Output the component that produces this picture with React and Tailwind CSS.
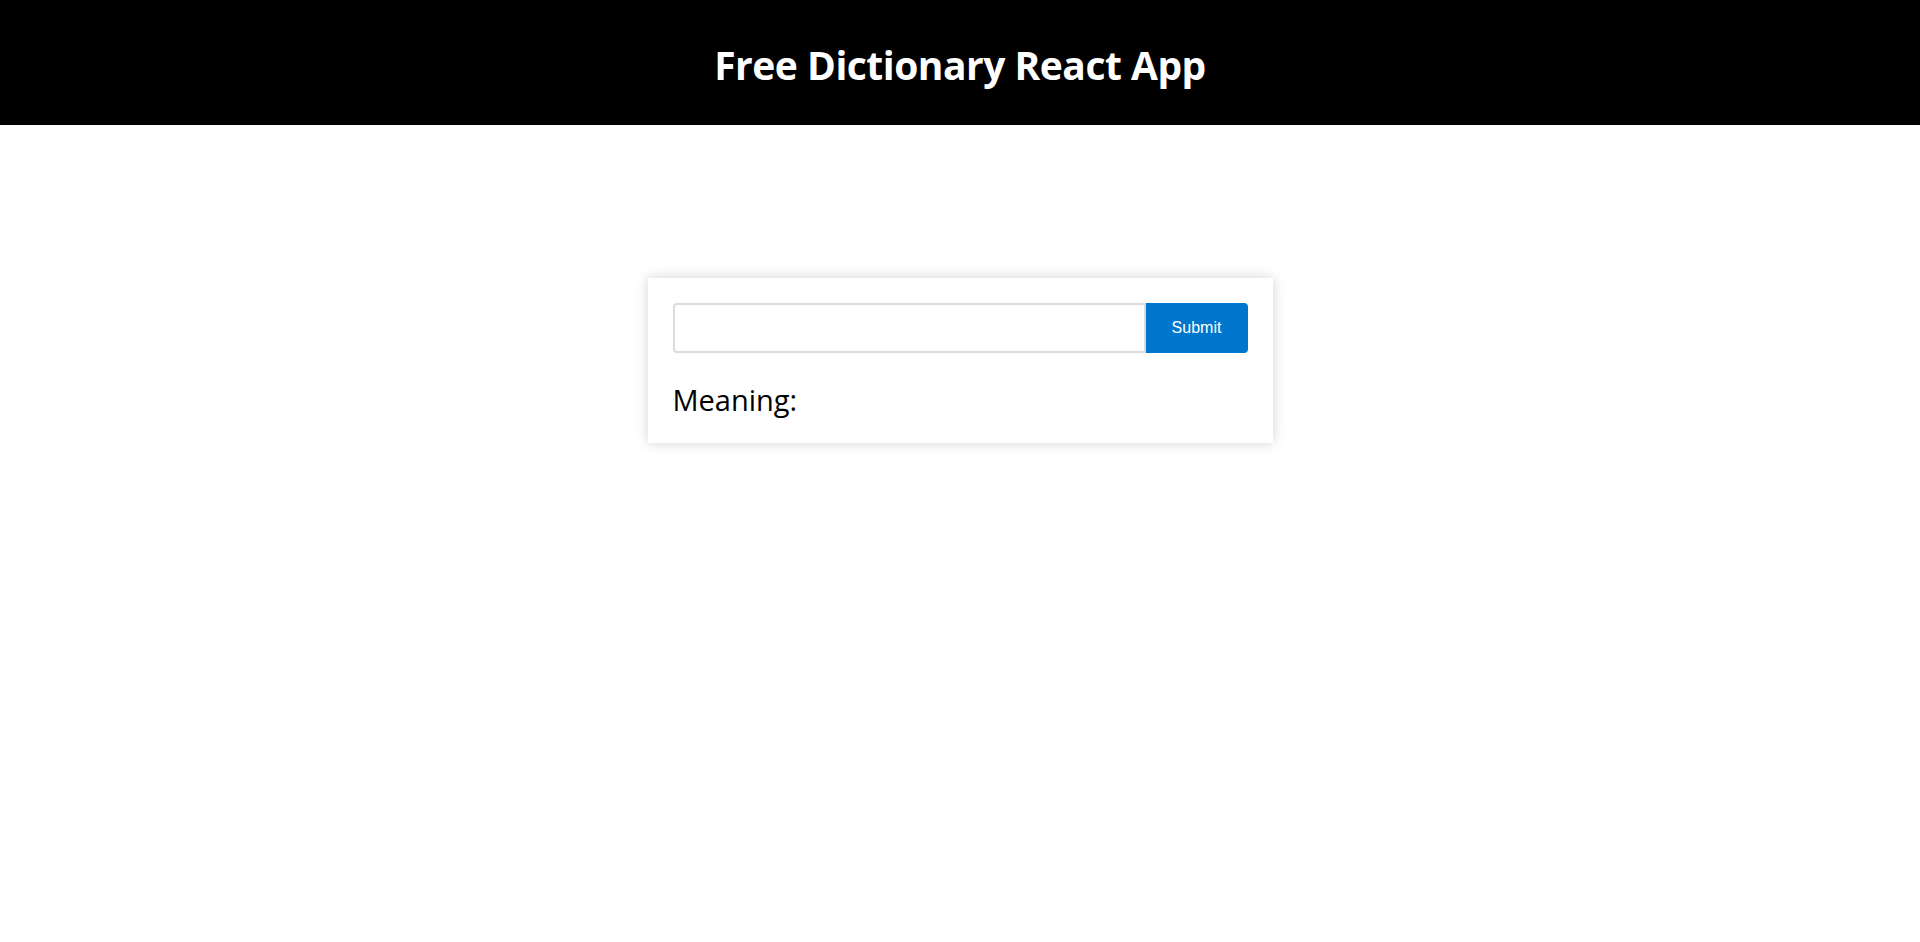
export default function App() {
  return (
    <div className="min-h-[942px] bg-white" style={{ fontFamily: '"Open Sans", "Noto Sans", sans-serif' }}>
      <header className="h-[125px] bg-black flex items-center justify-center pt-[4px]">
        <h1 className="text-white font-bold text-[39px] leading-none tracking-[-0.5px]">Free Dictionary React App</h1>
      </header>
      <main className="flex justify-center pt-[153px]">
        <div className="w-[625px] bg-white shadow-[0_0_12px_rgba(0,0,0,0.18)] px-[25px] pt-[25px] pb-[23px]">
          <form className="flex h-[50px]" onSubmit={(e) => e.preventDefault()}>
            <input type="text" className="flex-1 border-2 border-[#dcdcdc] rounded-l-[4px] outline-none px-2" />
            <button type="submit" className="w-[102px] bg-[#0077cc] text-white rounded-r-[4px] text-[16px]" style={{ fontFamily: '"Liberation Sans", Arial, sans-serif' }}>Submit</button>
          </form>
          <div className="mt-[27px] text-[29px] leading-[40px] text-black">Meaning:</div>
        </div>
      </main>
    </div>
  );
}
